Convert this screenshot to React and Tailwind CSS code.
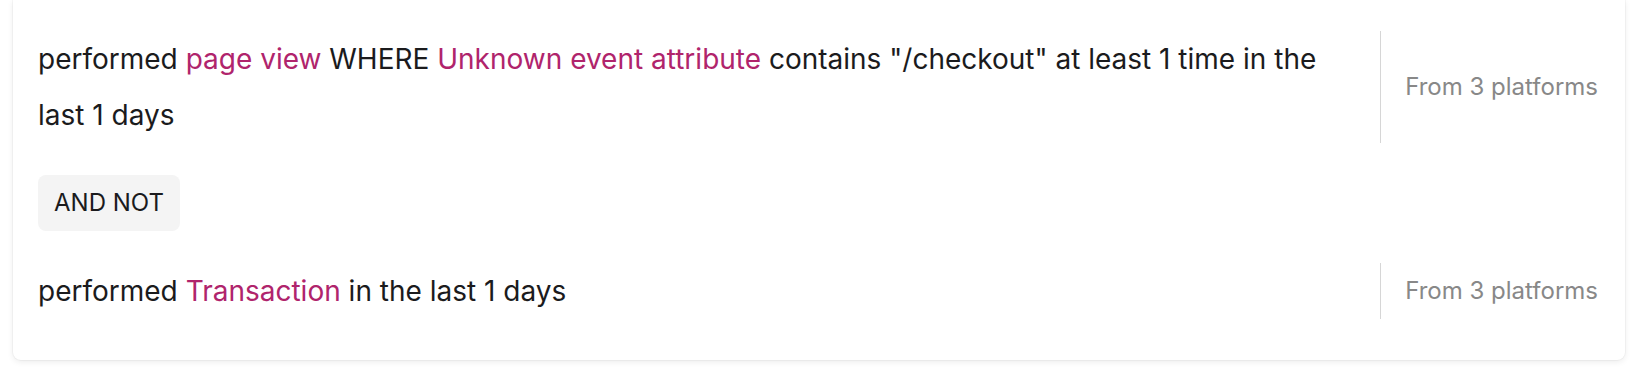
const rows = [
  {
    id: 'checkout',
    parts: [
      { text: 'performed ' },
      { text: 'page view', accent: true },
      { text: ' WHERE ' },
      { text: 'Unknown event attribute', accent: true },
      { text: ' contains "/checkout" at least 1 time in the last 1 days' },
    ],
    source: 'From 3 platforms',
  },
  {
    id: 'transaction',
    parts: [
      { text: 'performed ' },
      { text: 'Transaction', accent: true },
      { text: ' in the last 1 days' },
    ],
    source: 'From 3 platforms',
  },
];

const ConditionRow = ({ parts, source }) => (
  <div className="flex items-stretch">
    <p className="flex-1 pr-6 text-[28px] leading-[56px] text-[#1b1b1d]">
      {parts.map((part, i) =>
        part.accent ? (
          <span key={i} className="text-[#b0246c]">
            {part.text}
          </span>
        ) : (
          <span key={i}>{part.text}</span>
        )
      )}
    </p>
    <div className="flex shrink-0 items-center border-l border-[#d6d6d6] pl-6 text-[24px] text-[#888888]">
      {source}
    </div>
  </div>
);

export default function App() {
  return (
    <div className="min-h-screen bg-white px-[13px] font-['Inter',sans-serif]">
      <div className="rounded-b-lg bg-white pl-[25px] pr-[27px] pt-[31px] pb-[41px] shadow-[0_2px_6px_rgba(0,0,0,0.08)] ring-1 ring-black/[0.03]">
        <ConditionRow {...rows[0]} />
        <div className="py-8">
          <span className="inline-flex h-14 items-center rounded-lg bg-[#f4f4f4] px-4 text-[24px] text-[#1b1b1d]">
            AND NOT
          </span>
        </div>
        <ConditionRow {...rows[1]} />
      </div>
    </div>
  );
}
